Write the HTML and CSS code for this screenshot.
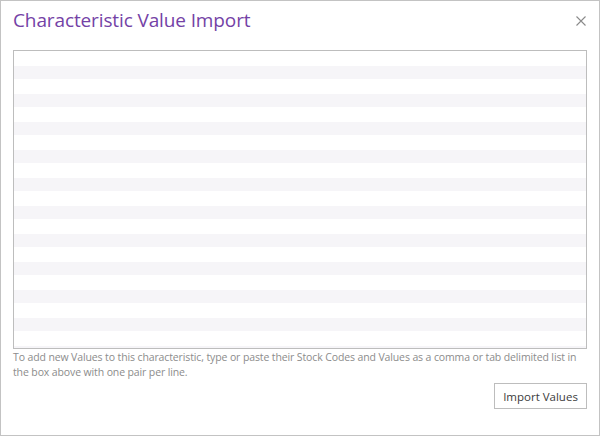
FILE: index.html
```html
<!DOCTYPE html>
<html>
<head>
<meta charset="utf-8">
<link rel="stylesheet" href="styles.css">
</head>
<body>
<div class="dialog">
  <div class="header">
    <h1 class="title">Characteristic Value Import</h1>
    <button class="close" aria-label="Close">
      <svg width="10" height="10" viewBox="0 0 10 10"><path d="M0.5 0.5 L9.5 9.5 M9.5 0.5 L0.5 9.5" stroke="#8a8a8a" stroke-width="1.1" fill="none"/></svg>
    </button>
  </div>
  <div class="input-box"></div>
  <p class="help">To add new Values to this characteristic, type or paste their Stock Codes and Values as a comma or tab delimited list in the box above with one pair per line.</p>
  <div class="footer">
    <button class="import">Import Values</button>
  </div>
</div>
</body>
</html>
```
FILE: styles.css
```css
html, body {
  margin: 0;
  padding: 0;
  background: #ffffff;
}
.dialog {
  box-sizing: border-box;
  width: 600px;
  height: 436px;
  border: 1px solid #c3c3c3;
  padding: 0 12px;
  font-family: "Open Sans", "Noto Sans", sans-serif;
  display: flex;
  flex-direction: column;
}
.header {
  display: flex;
  align-items: center;
  justify-content: space-between;
  height: 49px;
}
.title {
  margin: 0 0 11px;
  font-weight: 400;
  font-size: 19px;
  color: #7442a6;
  line-height: 24px;
  letter-spacing: -0.12px;
}
.close {
  border: 0;
  background: transparent;
  padding: 0;
  width: 10px;
  height: 10px;
  margin: 0 1px 10px 0;
  display: flex;
}
.input-box {
  height: 297px;
  border: 1px solid #bdbdbd;
  background-image: repeating-linear-gradient(to bottom, #ffffff 0, #ffffff 15px, #f6f5f8 15px, #f6f5f8 28px);
}
.help {
  margin: 1px 0 0;
  font-size: 10.5px;
  line-height: 15px;
  letter-spacing: -0.12px;
  color: #8c8c8c;
}
.footer {
  display: flex;
  justify-content: flex-end;
  margin-top: 3px;
}
.import {
  font-family: "Open Sans", "Noto Sans", sans-serif;
  font-size: 11.5px;
  color: #3c3c3c;
  background: #ffffff;
  border: 1px solid #bdbdbd;
  height: 26px;
  width: 93px;
  padding: 0;
}
```
